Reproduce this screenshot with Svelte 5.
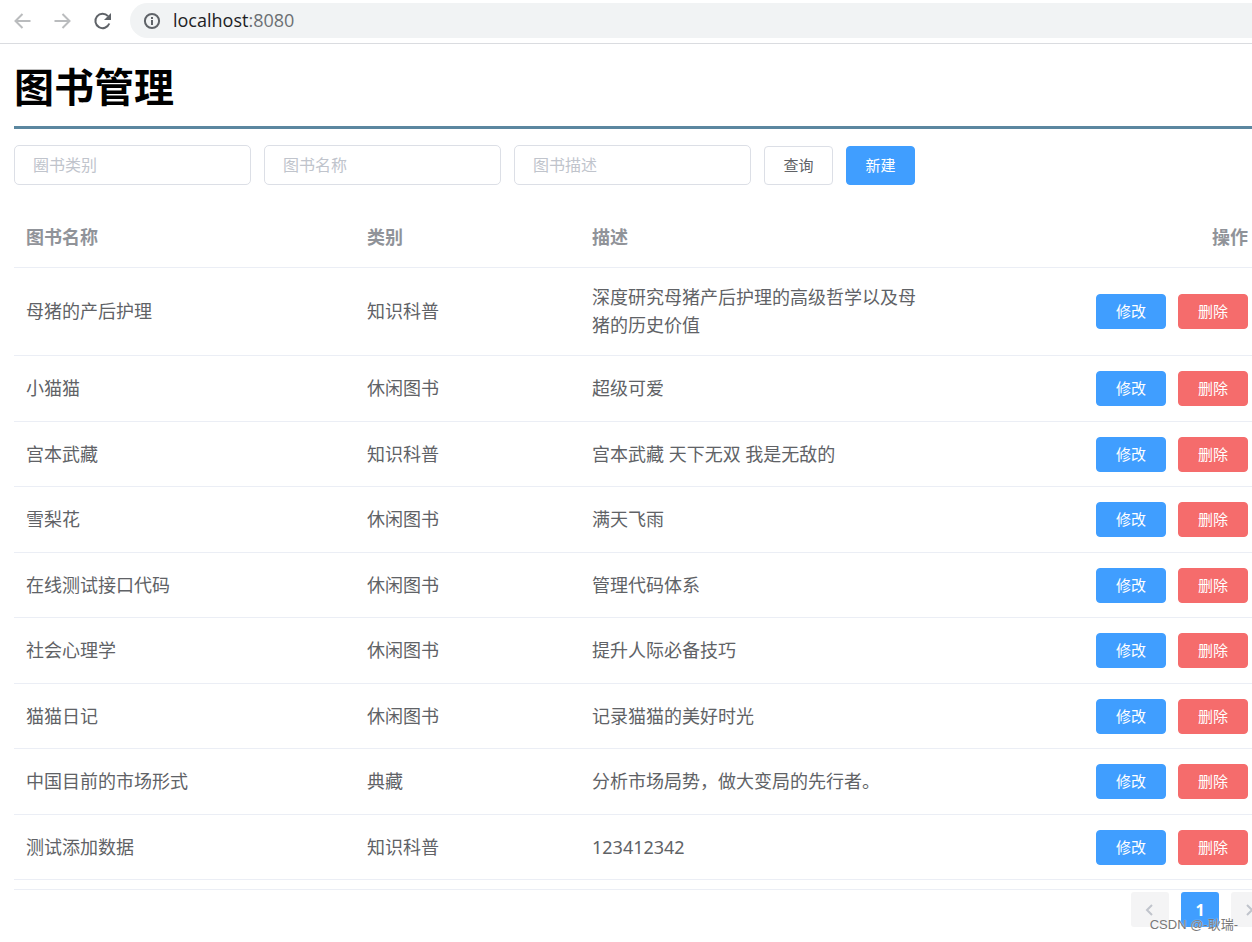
<script>
  let filters = $state({ type: '', name: '', description: '' });
  let page = $state(1);

  const fields = [
    { key: 'type', label: '圈书类别' },
    { key: 'name', label: '图书名称' },
    { key: 'description', label: '图书描述' }
  ];

  const books = [
    { name: '母猪的产后护理', type: '知识科普', description: '深度研究母猪产后护理的高级哲学以及母猪的历史价值' },
    { name: '小猫猫', type: '休闲图书', description: '超级可爱' },
    { name: '宫本武藏', type: '知识科普', description: '宫本武藏 天下无双 我是无敌的' },
    { name: '雪梨花', type: '休闲图书', description: '满天飞雨' },
    { name: '在线测试接口代码', type: '休闲图书', description: '管理代码体系' },
    { name: '社会心理学', type: '休闲图书', description: '提升人际必备技巧' },
    { name: '猫猫日记', type: '休闲图书', description: '记录猫猫的美好时光' },
    { name: '中国目前的市场形式', type: '典藏', description: '分析市场局势，做大变局的先行者。' },
    { name: '测试添加数据', type: '知识科普', description: '123412342' }
  ];
</script>

<div class="window">
  <header class="toolbar">
    <button class="nav" aria-label="Back" disabled>
      <svg width="20" height="20" viewBox="0 0 20 20"><path d="M18.5 10H3.500M10.500 3L3.500 10l7 7" /></svg>
    </button>
    <button class="nav" aria-label="Forward" disabled>
      <svg width="20" height="20" viewBox="0 0 20 20"><path d="M2.500 10H17.500M10.500 3l7 7-7 7" /></svg>
    </button>
    <button class="nav reload" aria-label="Reload">
      <svg width="20" height="20" viewBox="0 0 20 20">
        <path d="M17.300 12.500A7.200 7.200 0 1 1 16 5.200" />
        <path class="solid" d="M19 2v7h-7z" />
      </svg>
    </button>
    <div class="address">
      <svg width="18" height="18" viewBox="0 0 18 18">
        <circle cx="9" cy="9" r="7.1" />
        <path d="M9 8v5M9 5v2" />
      </svg>
      <span class="url">localhost<span class="port">:8080</span></span>
    </div>
  </header>

  <main>
    <h1>图书管理</h1>

    <form class="filters" onsubmit={(e) => e.preventDefault()}>
      {#each fields as field}
        <input type="text" aria-label={field.label} placeholder={field.label} bind:value={filters[field.key]} />
      {/each}
      <button class="btn" type="submit">查询</button>
      <button class="btn primary" type="button">新建</button>
    </form>

    <table>
      <colgroup>
        <col class="col-name" />
        <col class="col-type" />
        <col class="col-desc" />
        <col />
      </colgroup>
      <thead>
        <tr>
          <th>图书名称</th>
          <th>类别</th>
          <th>描述</th>
          <th class="right">操作</th>
        </tr>
      </thead>
      <tbody>
        {#each books as book}
          <tr>
            <td>{book.name}</td>
            <td>{book.type}</td>
            <td>{book.description}</td>
            <td>
              <div class="actions">
                <button class="btn small primary">修改</button>
                <button class="btn small danger">删除</button>
              </div>
            </td>
          </tr>
        {/each}
      </tbody>
    </table>

    <nav class="pager" aria-label="分页">
      <button aria-label="上一页" disabled>
        <svg width="12" height="14" viewBox="0 0 12 14"><path d="M8 2L3 7l5 5" /></svg>
      </button>
      <button class="current" onclick={() => (page = 1)}>{page}</button>
      <button aria-label="下一页" disabled>
        <svg width="12" height="14" viewBox="0 0 12 14"><path d="M3 2l5 5-5 5" /></svg>
      </button>
    </nav>
  </main>

  <div class="watermark">CSDN @-耿瑞-</div>
</div>

<style>
  :global(body) { margin: 0; background: #fff; }
  .window { position: relative; overflow: hidden; padding-bottom: 15px; font-family: "Noto Sans", "Noto Sans CJK SC", sans-serif; color: #606266; }
  button, input { font-family: inherit; box-sizing: border-box; }
  svg { display: block; fill: none; stroke: currentColor; stroke-width: 2; }

  .toolbar { display: flex; align-items: center; height: 44px; padding: 0 0 2px 12px; box-sizing: border-box; border-bottom: 1px solid #dadce0; }
  .nav { width: 20px; height: 20px; margin-right: 20px; padding: 0; border: 0; background: none; color: #babcbe; }
  .reload { margin-right: 18px; color: #5f6368; }
  .solid { fill: currentColor; stroke: none; }
  .address { flex: 1; display: flex; align-items: center; height: 35px; padding-left: 13px; border-radius: 18px 0 0 18px; background: #f1f3f4; color: #5f6368; }
  .url { margin-left: 12px; padding-bottom: 2px; font: 18px/24px "Open Sans", "Noto Sans", sans-serif; color: #202124; }
  .port { color: #6b6f73; }

  main { padding-left: 14px; }
  h1 { margin: 0; height: 82px; line-height: 86px; font-size: 40px; font-weight: 700; color: #000; border-bottom: 3px solid #5b87a0; }

  .filters { display: flex; align-items: center; gap: 13px; margin: 16px 0 23px; }
  .filters input { width: 237px; height: 40px; padding: 0 18px; border: 1px solid #dcdfe6; border-radius: 5px; font-size: 16px; color: #606266; outline: none; }
  .filters input::placeholder { color: #c0c4cc; }

  .btn { width: 69px; height: 39px; padding: 0 0 2px; border: 1px solid #dcdfe6; border-radius: 4px; background: #fff; color: #606266; font-size: 15px; cursor: pointer; }
  .btn.small { width: 70px; height: 35px; }
  .btn.primary { background: #409eff; border-color: #409eff; color: #fff; }
  .btn.danger { background: #f56c6c; border-color: #f56c6c; color: #fff; }

  table { width: 100%; table-layout: fixed; border-collapse: separate; border-spacing: 0; font-size: 18px; line-height: 28px; }
  .col-name, .col-desc { width: 341px; }
  .col-type { width: 225px; }
  th, td { box-sizing: border-box; padding: 15px 4px 16px 12px; border-bottom: 1px solid #ebeef5; text-align: left; vertical-align: middle; }
  th { height: 60px; color: #909399; font-weight: 700; }
  td { height: 65px; }
  tr:nth-child(even) td { height: 66px; }
  td:last-child { padding-top: 14px; padding-bottom: 14px; }
  th.right { text-align: right; }
  .actions { display: flex; justify-content: flex-end; gap: 12px; }

  /* the last pager button runs past the window edge */
  .pager { display: flex; justify-content: flex-end; gap: 12px; margin-top: 9px; padding-top: 2px; border-top: 1px solid #ebeef5; margin-right: -17px; }
  .pager button { display: flex; align-items: center; justify-content: center; width: 38px; height: 35px; padding: 0; border: 0; border-radius: 3px; background: #f4f4f5; color: #c0c4cc; font-size: 16px; font-weight: 700; }
  .pager .current { background: #409eff; color: #fff; }

  .watermark { position: absolute; right: 14px; bottom: 7px; font: 13px/20px "Liberation Sans", "Noto Sans CJK SC", sans-serif; color: #777; text-shadow: 0 0 1px #fff; }
</style>
